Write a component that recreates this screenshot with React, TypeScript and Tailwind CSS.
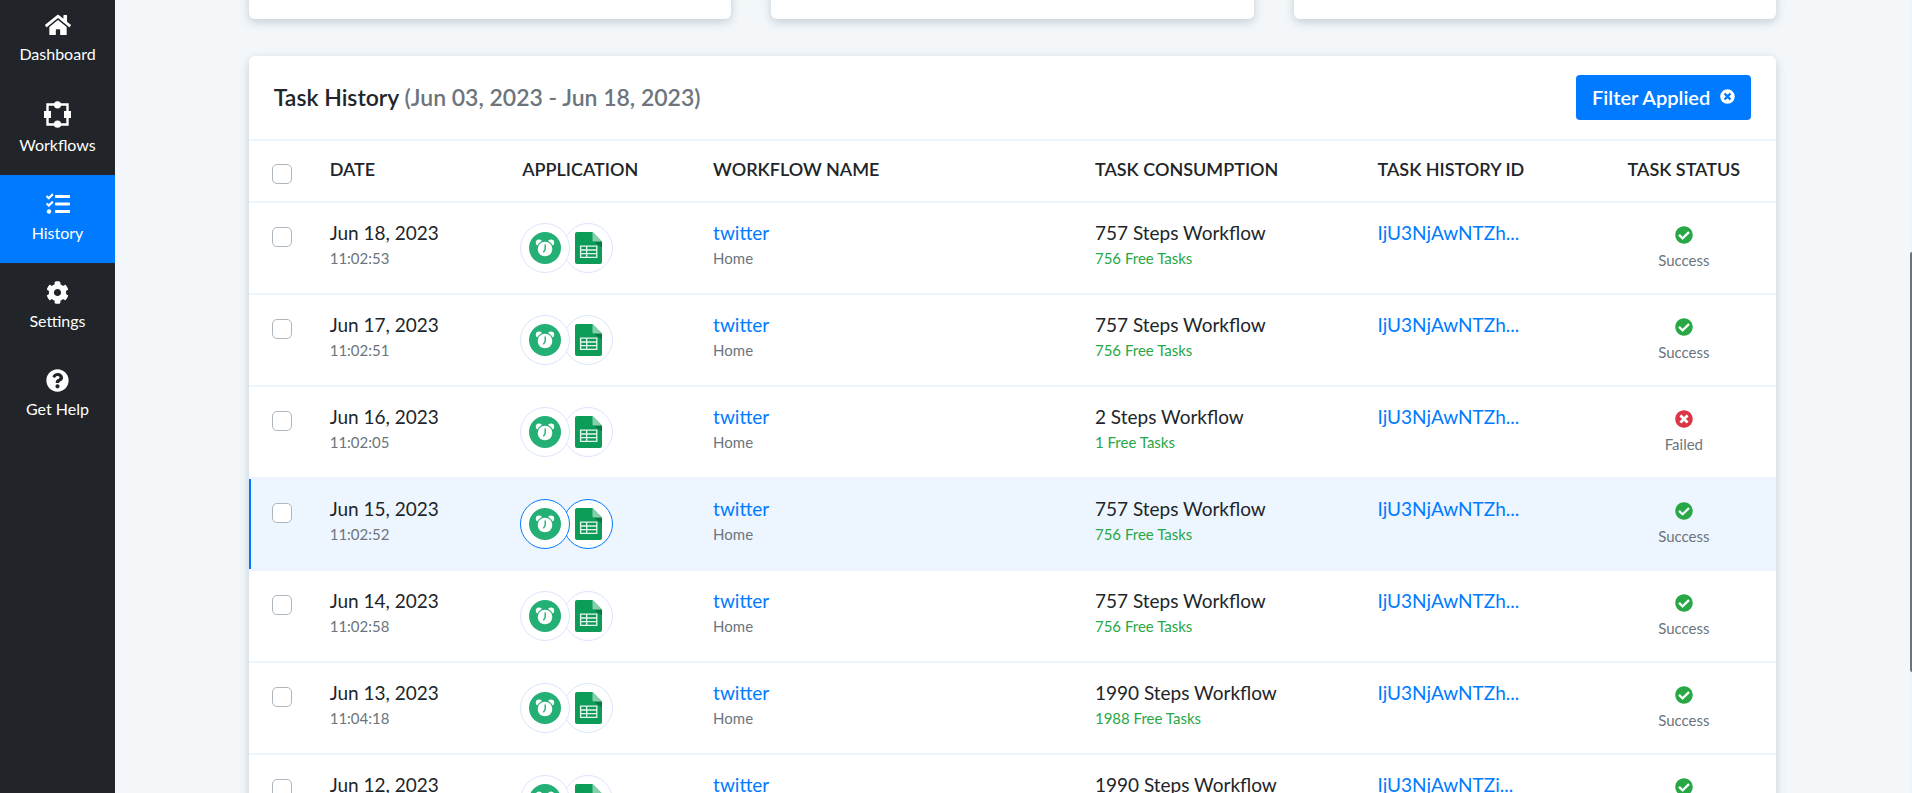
import { ReactNode } from "react";
import {
  FaCheckCircle,
  FaCog,
  FaHome,
  FaQuestionCircle,
  FaTasks,
  FaTimesCircle,
} from "react-icons/fa";

type Task = {
  date: string;
  time: string;
  steps: number;
  free: number;
  id: string;
  failed?: boolean;
  active?: boolean;
};

const TASKS: Task[] = [
  { date: "Jun 18, 2023", time: "11:02:53", steps: 757, free: 756, id: "IjU3NjAwNTZh..." },
  { date: "Jun 17, 2023", time: "11:02:51", steps: 757, free: 756, id: "IjU3NjAwNTZh..." },
  { date: "Jun 16, 2023", time: "11:02:05", steps: 2, free: 1, id: "IjU3NjAwNTZh...", failed: true },
  { date: "Jun 15, 2023", time: "11:02:52", steps: 757, free: 756, id: "IjU3NjAwNTZh...", active: true },
  { date: "Jun 14, 2023", time: "11:02:58", steps: 757, free: 756, id: "IjU3NjAwNTZh..." },
  { date: "Jun 13, 2023", time: "11:04:18", steps: 1990, free: 1988, id: "IjU3NjAwNTZh..." },
  { date: "Jun 12, 2023", time: "11:02:56", steps: 1990, free: 1988, id: "IjU3NjAwNTZi..." },
];

const CARD = "rounded-md bg-white shadow-[0_3px_10px_rgba(60,80,100,0.25)]";

function WorkflowIcon() {
  return (
    <svg width="27" height="27" viewBox="0 0 27 27" fill="currentColor" aria-hidden="true">
      <path d="M3.5 3.5h20v20h-20z" fill="none" stroke="currentColor" strokeWidth="2.4" />
      <circle cx="13.5" cy="3.8" r="3.6" />
      <circle cx="13.5" cy="23.2" r="3.6" />
      <path d="M0 10h7v7H0zM20 10h7v7h-7z" />
    </svg>
  );
}

function AlarmIcon() {
  return (
    <svg width="32" height="32" viewBox="0 0 32 32" aria-hidden="true">
      <circle cx="16" cy="16" r="16" fill="#24b074" />
      <circle cx="10" cy="10.6" r="3.2" fill="#fff" />
      <circle cx="22" cy="10.6" r="3.2" fill="#fff" />
      <circle cx="16" cy="17" r="8.4" fill="#24b074" />
      <circle cx="16" cy="17" r="7.3" fill="#fff" />
      <path d="M16.2 12.6v4.8l-1.8 3" fill="none" stroke="#24b074" strokeWidth="1.4" />
    </svg>
  );
}

function SheetsIcon() {
  return (
    <svg width="27" height="32" viewBox="0 0 27 32" aria-hidden="true">
      <path d="M2 0h15.500l9.500 9.500V30a2 2 0 0 1-2 2H2a2 2 0 0 1-2-2V2a2 2 0 0 1 2-2z" fill="#0b9d58" />
      <path d="M18.500 9.500H27V15.500z" fill="#077a43" />
      <path d="M17.500 0L27 9.500h-8.500a1 1 0 0 1-1-1z" fill="#87ceac" />
      <path
        d="M5.600 14.200h16.200v11.200H5.600zM5.600 18h16.200M5.600 21.700h16.200M11.700 14.200v11.200"
        fill="none"
        stroke="#e6f5ee"
        strokeWidth="1.3"
      />
    </svg>
  );
}

function NavItem({
  label,
  active = false,
  children,
}: {
  label: string;
  active?: boolean;
  children: ReactNode;
}) {
  return (
    <a
      href="#"
      className={`flex flex-col items-center gap-1.5 px-2 pt-[17px] pb-[19px] text-[16px] leading-[22px] text-white ${
        active ? "bg-[#007bff]" : ""
      }`}
    >
      <span className="flex min-h-6 items-center">{children}</span>
      {label}
    </a>
  );
}

function Checkbox({ label }: { label: string }) {
  return (
    <input
      type="checkbox"
      aria-label={label}
      className="ml-[23px] block size-5 appearance-none rounded-[5px] border border-[#adb5bd] bg-white checked:bg-[#007bff]"
    />
  );
}

function AppBadge({ active = false, children }: { active?: boolean; children: ReactNode }) {
  return (
    <span
      className={`flex size-[50px] items-center justify-center rounded-full border bg-white ${
        active ? "border-[#007bff]" : "border-[#d9e5fd]"
      }`}
    >
      {children}
    </span>
  );
}

function TaskRow({ task }: { task: Task }) {
  const cell = `h-[92px] border-b-2 border-[#edf5ff] p-0 align-top ${task.active ? "bg-[#edf5ff]" : ""}`;

  return (
    <tr>
      <td className={cell}>
        <div
          className={`h-[90px] border-l-2 pt-6 ${task.active ? "border-[#007bff]" : "border-transparent"}`}
        >
          <div className="-ml-0.5">
            <Checkbox label={`Select ${task.date}`} />
          </div>
        </div>
      </td>
      <td className={cell}>
        <div className="pt-[17px] text-[19px] leading-[26px] text-[#212529]">{task.date}</div>
        <div className="text-[15px] leading-6 text-[#6c757d]">{task.time}</div>
      </td>
      <td className={cell}>
        <div className="-ml-0.5 flex pt-5">
          <span className="z-10">
            <AppBadge active={task.active}>
              <AlarmIcon />
            </AppBadge>
          </span>
          <span className="-ml-[7px]">
            <AppBadge active={task.active}>
              <SheetsIcon />
            </AppBadge>
          </span>
        </div>
      </td>
      <td className={cell}>
        <div className="pt-[17px] text-[19px] leading-[26px]">
          <a href="#" className="text-[#007bff]">twitter</a>
        </div>
        <div className="text-[15px] leading-6 text-[#6c757d]">Home</div>
      </td>
      <td className={cell}>
        <div className="pt-[17px] text-[19px] leading-[26px] text-[#212529]">{task.steps} Steps Workflow</div>
        <div className="text-[15px] leading-6 text-[#28a745]">{task.free} Free Tasks</div>
      </td>
      <td className={cell}>
        <div className="pt-[17px] text-[19px] leading-[26px]">
          <a href="#" className="text-[#007bff]">{task.id}</a>
        </div>
      </td>
      <td className={cell}>
        <div className="flex flex-col items-center gap-1 pt-[23px] text-[15px] leading-6 text-[#6c757d]">
          {task.failed ? (
            <FaTimesCircle size={18} className="text-[#dc3545]" />
          ) : (
            <FaCheckCircle size={18} className="text-[#28a745]" />
          )}
          {task.failed ? "Failed" : "Success"}
        </div>
      </td>
    </tr>
  );
}

export default function App() {
  const head = "h-[62px] border-b-2 border-[#edf5ff] p-0 pt-3.5 text-left align-top text-[18px] leading-7 font-semibold";

  return (
    <div className="relative flex h-screen overflow-hidden bg-[#f3f7fa] font-['Lato','Noto_Sans',sans-serif] text-[#212529]">
      <nav className="-mt-1 w-[115px] shrink-0 bg-[#212529]">
        <NavItem label="Dashboard">
          <FaHome size={26} className="-my-px" />
        </NavItem>
        <NavItem label="Workflows">
          <WorkflowIcon />
        </NavItem>
        <NavItem label="History" active>
          <FaTasks size={24} />
        </NavItem>
        <NavItem label="Settings">
          <FaCog size={23} />
        </NavItem>
        <NavItem label="Get Help">
          <FaQuestionCircle size={23} />
        </NavItem>
      </nav>

      <main className="flex-1 pr-0.5">
        <div className="mx-auto w-[85.1%]">
          <div className="-mt-5 grid grid-cols-3 gap-10">
            <div className={`h-[39px] ${CARD}`} />
            <div className={`h-[39px] ${CARD}`} />
            <div className={`h-[39px] ${CARD}`} />
          </div>

          <section className={`mt-[37px] ${CARD}`}>
            <header className="flex items-start justify-between border-b-2 border-[#edf5ff] px-[25px] pt-[19px] pb-[19px]">
              <h1 className="pt-2 text-[23px] leading-7 font-semibold">
                Task History <span className="text-[#6c757d]">(Jun 03, 2023 - Jun 18, 2023)</span>
              </h1>
              <button
                type="button"
                className="flex h-[45px] items-center gap-2.5 rounded bg-[#007bff] px-4 pb-0.5 text-[20px] font-semibold text-white"
              >
                Filter Applied
                <FaTimesCircle size={15} />
              </button>
            </header>

            <table className="w-full table-fixed border-separate border-spacing-0">
              <colgroup>
                <col className="w-[5.3%]" />
                <col className="w-[12.6%]" />
                <col className="w-[12.5%]" />
                <col className="w-[25%]" />
                <col className="w-[18.5%]" />
                <col className="w-[14%]" />
                <col className="w-[12.1%]" />
              </colgroup>
              <thead>
                <tr>
                  <th className="border-b-2 border-[#edf5ff] p-0 pt-[23px] align-top">
                    <Checkbox label="Select all tasks" />
                  </th>
                  <th className={head}>DATE</th>
                  <th className={head}>APPLICATION</th>
                  <th className={head}>WORKFLOW NAME</th>
                  <th className={head}>TASK CONSUMPTION</th>
                  <th className={head}>TASK HISTORY ID</th>
                  <th className="border-b-2 border-[#edf5ff] p-0 pt-3.5 text-center align-top text-[18px] leading-7 font-semibold">
                    TASK STATUS
                  </th>
                </tr>
              </thead>
              <tbody>
                {TASKS.map((task) => (
                  <TaskRow key={task.date} task={task} />
                ))}
              </tbody>
            </table>
          </section>
        </div>
      </main>

      {/* page scroll position */}
      <div className="absolute inset-y-0 right-0 w-0.5 bg-[#edf5ff]">
        <div className="mt-[252px] h-[53%] rounded-l-sm bg-[#6c757d]" />
      </div>
    </div>
  );
}
